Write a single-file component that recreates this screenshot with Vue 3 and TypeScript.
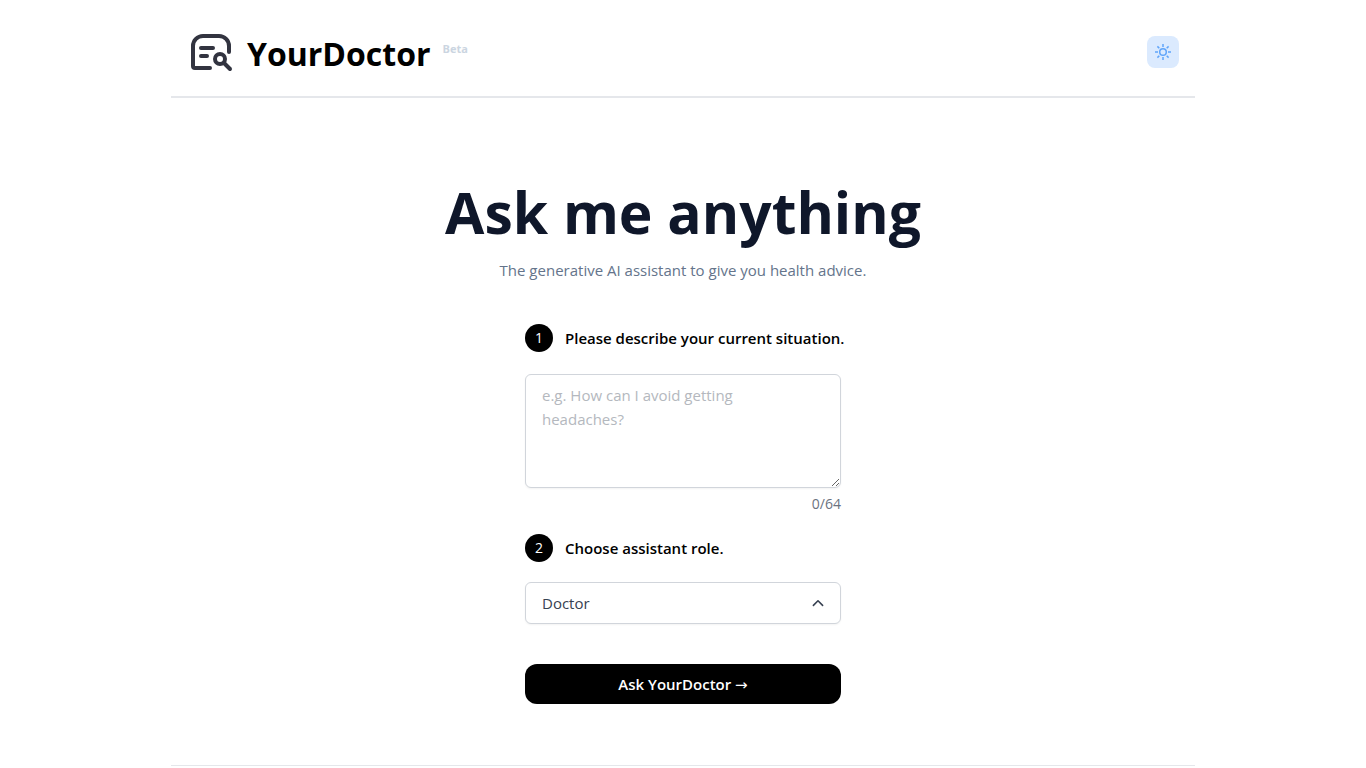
<script setup lang="ts">
import { computed, ref } from 'vue'

const maxLength = 64
const roles: string[] = ['Doctor', 'Nutritionist', 'Therapist', 'Trainer']

const situation = ref<string>('')
const role = ref<string>(roles[0])
const counter = computed<string>(() => `${situation.value.length}/${maxLength}`)
</script>

<template>
  <div class="page">
    <header class="header">
      <a class="brand" href="#">
        <svg class="logo" viewBox="0 0 44 40" fill="none" aria-hidden="true">
          <path d="M21 36H6a2 2 0 0 1-2-2V14A10 10 0 0 1 14 4h16a10 10 0 0 1 10 10v6" />
          <path d="M12 16h12M12 24h6" />
          <circle cx="31" cy="27" r="5" />
          <path d="M35 31l6 6" />
        </svg>
        <span class="name">YourDoctor</span>
        <span class="beta">Beta</span>
      </a>
      <button class="theme" type="button" aria-label="Toggle theme">
        <svg viewBox="0 0 16 16" fill="none" aria-hidden="true">
          <circle cx="8" cy="8" r="3.3" />
          <path d="M8 0v3M8 13v3M0 8h3M13 8h3M2.4 2.4l1.9 1.9M11.7 11.7l1.9 1.9M2.4 13.6l1.9-1.9M11.7 4.3l1.9-1.9" />
        </svg>
      </button>
    </header>

    <main class="main">
      <h1>Ask me anything</h1>
      <p class="lead">The generative AI assistant to give you health advice.</p>

      <form class="form" @submit.prevent>
        <label class="step" for="situation">
          <span class="number">1</span>
          <span>Please describe your current situation.</span>
        </label>
        <textarea
          id="situation"
          v-model="situation"
          :maxlength="maxLength"
          rows="4"
          placeholder="e.g. How can I avoid getting headaches?"
        ></textarea>
        <div class="counter">{{ counter }}</div>

        <label class="step" for="role">
          <span class="number">2</span>
          <span>Choose assistant role.</span>
        </label>
        <div class="picker">
          <select id="role" v-model="role">
            <option v-for="item in roles" :key="item" :value="item">{{ item }}</option>
          </select>
          <svg class="chevron" viewBox="0 0 12 8" fill="none" aria-hidden="true">
            <path d="M1.4 6.4L6 1.8l4.6 4.6" />
          </svg>
        </div>

        <button class="submit" type="submit">Ask YourDoctor <span class="arrow">→</span></button>
      </form>
    </main>

    <footer class="footer"></footer>
  </div>
</template>

<style>
body {
  margin: 0;
  background: #fff;
}
</style>

<style scoped>
.page {
  box-sizing: border-box;
  max-width: 1024px;
  margin: 0 auto;
  font-family: "Open Sans", "Noto Sans", sans-serif;
  font-size: 15px;
  line-height: 24px;
  color: #000;
}

.header {
  display: flex;
  align-items: center;
  justify-content: space-between;
  padding: 26px 16px 18px;
  border-bottom: 2px solid #e5e7eb;
}

.brand {
  display: flex;
  align-items: center;
  padding-left: 2px;
  color: inherit;
  text-decoration: none;
}

.logo {
  width: 44px;
  height: 40px;
  margin-right: 14px;
  stroke: #323440;
  stroke-width: 4;
  stroke-linecap: round;
  stroke-linejoin: round;
}

.name {
  padding-top: 4px;
  font-size: 32px;
  line-height: 48px;
  font-weight: 700;
}

.beta {
  align-self: flex-start;
  margin-left: 12px;
  font-size: 11px;
  line-height: 46px;
  font-weight: 700;
  color: #cbd5e1;
}

.theme {
  display: flex;
  align-items: center;
  justify-content: center;
  width: 32px;
  height: 32px;
  padding: 0;
  border: 0;
  border-radius: 8px;
  background: #dbeafe;
}

.theme svg {
  width: 16px;
  height: 16px;
  stroke: #60a5fa;
  stroke-width: 1.5;
}

.main {
  display: flex;
  flex-direction: column;
  align-items: center;
  padding: 80px 16px 61px;
}

h1 {
  margin: 0;
  font-size: 57px;
  line-height: 68px;
  font-weight: 700;
  color: #0f172a;
}

.lead {
  margin: 12px 0 0;
  color: #64748b;
}

.form {
  display: flex;
  flex-direction: column;
  width: 316px;
  max-width: 100%;
  margin-top: 42px;
}

.step {
  display: flex;
  align-items: center;
  gap: 12px;
  font-weight: 600;
  white-space: nowrap;
}

.number {
  display: flex;
  flex: none;
  align-items: center;
  justify-content: center;
  width: 28px;
  height: 28px;
  border-radius: 50%;
  background: #000;
  color: #fff;
  font-size: 14px;
  font-weight: 400;
}

textarea,
select {
  box-sizing: border-box;
  width: 100%;
  border: 1px solid #d1d5db;
  border-radius: 6px;
  background: #fff;
  box-shadow: 0 1px 2px rgba(0, 0, 0, 0.05);
  font: inherit;
  color: #374151;
}

textarea {
  display: block;
  height: 114px;
  margin-top: 22px;
  padding: 8px 32px 8px 16px;
  resize: vertical;
}

textarea::placeholder {
  color: #b4b8be;
}

.counter {
  margin: 4px 0 18px;
  text-align: right;
  font-size: 14px;
  color: #6b7280;
}

.picker {
  display: grid;
  align-items: center;
  margin-top: 20px;
}

.picker > * {
  grid-area: 1 / 1;
}

select {
  height: 42px;
  padding: 0 40px 0 16px;
  appearance: none;
}

.chevron {
  justify-self: end;
  width: 12px;
  height: 8px;
  margin-right: 17px;
  stroke: #374151;
  stroke-width: 1.6;
  stroke-linecap: round;
  stroke-linejoin: round;
  pointer-events: none;
}

.submit {
  height: 40px;
  margin-top: 40px;
  padding: 0 16px;
  border: 0;
  border-radius: 12px;
  background: #000;
  color: #fff;
  font: inherit;
  font-weight: 600;
}

.arrow {
  font-family: "DejaVu Sans", sans-serif;
  font-weight: 400;
}

.footer {
  border-top: 1px solid #e5e7eb;
}
</style>
